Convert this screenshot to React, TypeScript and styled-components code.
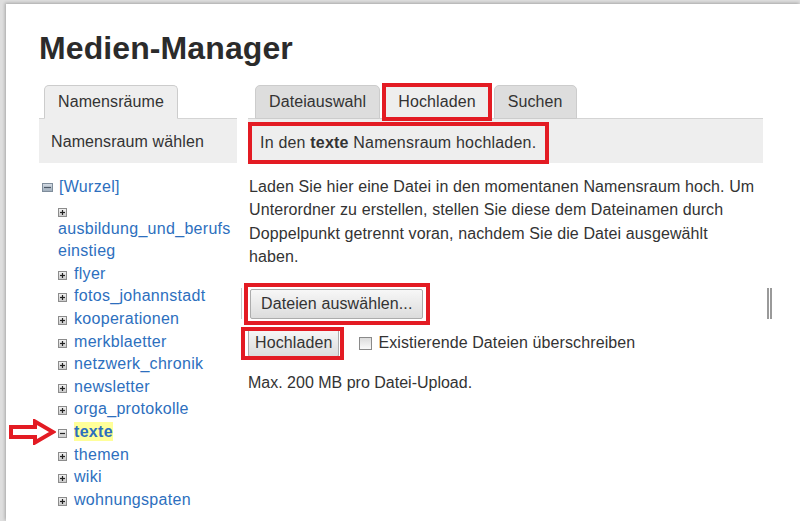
import React from "react";
import styled, { createGlobalStyle } from "styled-components";

const red = "#e31b23";
const linkBlue = "#2d6fbe";

const GlobalStyle = createGlobalStyle`
  html, body {
    margin: 0;
    padding: 0;
    background: #dedede;
  }
  body {
    font-family: "Liberation Sans", Arial, sans-serif;
    color: #333;
    font-size: 16px;
    overflow: hidden;
  }
`;

const folders = [
  "ausbildung_und_berufseinstieg",
  "flyer",
  "fotos_johannstadt",
  "kooperationen",
  "merkblaetter",
  "netzwerk_chronik",
  "newsletter",
  "orga_protokolle",
  "texte",
  "themen",
  "wiki",
  "wohnungspaten",
];

type Inset = { top: number; right: number; bottom: number; left: number };

const ToggleIcon = ({ open, root }: { open?: boolean; root?: boolean }) => {
  const w = root ? 11 : 9;
  const fillTop = root ? "#d7dee6" : "#f4f4f4";
  const fillBottom = root ? "#9eacba" : "#c9c9c9";
  const id = root ? "gRoot" : open ? "gOpen" : "gClosed";
  return (
    <svg width={w} height={9} viewBox={`0 0 ${w} 9`}>
      <defs>
        <linearGradient id={id} x1="0" y1="0" x2="0" y2="1">
          <stop offset="0" stopColor={fillTop} />
          <stop offset="1" stopColor={fillBottom} />
        </linearGradient>
      </defs>
      <rect x="0.5" y="0.5" width={w - 1} height="8" fill={`url(#${id})`} stroke={root ? "#7f8d9b" : "#8c8c8c"} />
      <path d={`M2 4.5h${w - 4}`} stroke={root ? "#4b5866" : "#222"} strokeWidth="1.2" />
      {!open && <path d="M4.5 2v5" stroke="#222" strokeWidth="1.2" />}
    </svg>
  );
};

const Arrow = () => (
  <svg width="48" height="26" viewBox="0 0 48 26">
    <path
      d="M3 8 L27 8 L27 2.5 L45 13 L27 23.5 L27 18 L3 18 Z"
      fill="#fff"
      stroke={red}
      strokeWidth="4"
      strokeLinejoin="miter"
    />
  </svg>
);

const App = () => {
  return (
    <>
      <GlobalStyle />
      <Page>
        <Title>Medien-Manager</Title>
        <Columns>
          <Sidebar>
            <TabRow>
              <Tab $active>Namensräume</Tab>
            </TabRow>
            <PanelBar>Namensraum wählen</PanelBar>
            <Tree>
              <TreeRow>
                <ToggleIcon open root />
                <TreeLink>[Wurzel]</TreeLink>
              </TreeRow>
              <SubTree>
                {folders.map((name) => {
                  const current = name === "texte";
                  const long = name.length > 20;
                  return (
                    <TreeItem key={name}>
                      {current && (
                        <ArrowMark>
                          <Arrow />
                        </ArrowMark>
                      )}
                      {long ? (
                        <IconLine>
                          <ToggleIcon />
                        </IconLine>
                      ) : (
                        <ToggleIcon open={current} />
                      )}
                      <TreeLink $current={current} $gap={!long}>
                        {name}
                      </TreeLink>
                    </TreeItem>
                  );
                })}
              </SubTree>
            </Tree>
          </Sidebar>

          <Main>
            <TabRow $indent>
              <Tab>Dateiauswahl</Tab>
              <Tab $active $mark={{ top: -3, right: -3, bottom: -3, left: -3 }}>
                Hochladen
              </Tab>
              <Tab>Suchen</Tab>
            </TabRow>
            <InfoBar>
              <InfoBox>
                In den&nbsp;<b>texte</b>&nbsp;Namensraum hochladen.
              </InfoBox>
            </InfoBar>
            <Intro>
              Laden Sie hier eine Datei in den momentanen Namensraum hoch. Um Unterordner zu erstellen,
              stellen Sie diese dem Dateinamen durch Doppelpunkt getrennt voran, nachdem Sie die Datei
              ausgewählt haben.
            </Intro>
            <FileField>
              <Button $height={30} $pad={10} $mark={{ top: -7, right: -8, bottom: -7, left: -7 }}>
                Dateien auswählen...
              </Button>
            </FileField>
            <UploadRow>
              <Button $height={28} $pad={6} $mark={{ top: -3, right: -6, bottom: -4, left: -8 }}>
                Hochladen
              </Button>
              <CheckLabel>
                <CheckBox type="checkbox" />
                Existierende Dateien überschreiben
              </CheckLabel>
            </UploadRow>
            <Note>Max. 200 MB pro Datei-Upload.</Note>
          </Main>
        </Columns>
      </Page>
    </>
  );
};

const Page = styled.div`
  margin: 4px 0 0 6px;
  min-height: 517px;
  background: #fff;
  box-shadow: -1px -1px 3px rgba(0, 0, 0, 0.25);
  padding: 25px 0 0 33px;
  box-sizing: border-box;
`;

const Title = styled.h1`
  margin: 0;
  font-size: 32px;
  line-height: 38px;
  font-weight: bold;
  color: #2b2b2b;
  letter-spacing: 0.1px;
`;

const Columns = styled.div`
  display: flex;
  gap: 11px;
  margin-top: 17px;
`;

const Sidebar = styled.div`
  width: 198px;
  flex: none;
`;

const Main = styled.div`
  width: 515px;
  flex: none;
`;

const TabRow = styled.div<{ $indent?: boolean }>`
  display: flex;
  gap: 4px;
  height: 35px;
  padding-left: ${(p) => (p.$indent ? "7px" : "5px")};
  border-bottom: 1px solid #d4d4d4;
  box-sizing: border-box;
`;

const Tab = styled.div<{ $active?: boolean; $mark?: Inset }>`
  position: relative;
  display: flex;
  align-items: center;
  padding: 0 13px;
  margin-top: 1px;
  margin-bottom: -1px;
  background: ${(p) => (p.$active ? "#eee" : "#ddd")};
  border: 1px solid #ccc;
  border-bottom-color: ${(p) => (p.$active ? "#eee" : "#ccc")};
  border-radius: 5px 5px 0 0;
  font-size: 16px;
  color: #333;
  letter-spacing: 0.1px;

  &::after {
    content: "";
    display: ${(p) => (p.$mark ? "block" : "none")};
    position: absolute;
    top: ${(p) => p.$mark?.top ?? 0}px;
    right: ${(p) => p.$mark?.right ?? 0}px;
    bottom: ${(p) => p.$mark?.bottom ?? 0}px;
    left: ${(p) => p.$mark?.left ?? 0}px;
    border: 4px solid ${red};
  }
`;

const PanelBar = styled.div`
  height: 44px;
  display: flex;
  align-items: center;
  padding: 2px 0 0 12px;
  box-sizing: border-box;
  background: #eee;
  font-size: 16px;
  letter-spacing: 0.1px;
`;

const Tree = styled.div`
  margin-top: 13px;
  padding-left: 3px;
  line-height: 22.6px;
  letter-spacing: 0.3px;
`;

const TreeRow = styled.div`
  display: flex;
  align-items: center;
  gap: 6px;
`;

const SubTree = styled.div`
  padding: 0 4px 0 16px;
`;

const TreeItem = styled.div`
  position: relative;
  overflow-wrap: anywhere;
  svg {
    vertical-align: -1px;
  }
`;

const IconLine = styled.div`
  height: 19px;
  line-height: 0;
  padding-top: 9px;
  box-sizing: border-box;
`;

const ArrowMark = styled.span`
  position: absolute;
  left: -50px;
  top: -2px;
  line-height: 0;
`;

const TreeLink = styled.a<{ $current?: boolean; $gap?: boolean }>`
  color: ${linkBlue};
  font-size: 16px;
  text-decoration: none;
  margin-left: ${(p) => (p.$gap ? "7px" : "0")};
  font-weight: ${(p) => (p.$current ? "bold" : "normal")};
  background: ${(p) => (p.$current ? "#ffff99" : "transparent")};
  padding: ${(p) => (p.$current ? "1px 0" : "0")};
`;

const InfoBar = styled.div`
  height: 44px;
  background: #eee;
  padding-top: 3px;
  box-sizing: border-box;
  display: flex;
  align-items: flex-start;
`;

const InfoBox = styled.div`
  display: flex;
  align-items: center;
  height: 42px;
  padding: 0 9px 0 8px;
  border: 4px solid ${red};
  box-sizing: border-box;
  font-size: 16px;
  color: #333;
  white-space: nowrap;
  letter-spacing: 0.2px;
`;

const Intro = styled.p`
  margin: 12px 0 0 1px;
  padding-right: 6px;
  font-size: 16px;
  line-height: 23.3px;
  color: #333;
  letter-spacing: 0.1px;
`;

const FileField = styled.div`
  margin: 20px 0 0 -7px;
  width: 531px;
  height: 31px;
  padding-left: 8px;
  border-left: 1px solid #c8c8c8;
  border-right: 5px double #9a9a9a;
  box-sizing: border-box;
  display: flex;
  align-items: center;
`;

const Button = styled.button<{ $mark?: Inset; $height: number; $pad: number }>`
  position: relative;
  height: ${(p) => p.$height}px;
  padding: 0 ${(p) => p.$pad}px;
  font-family: "Liberation Sans", Arial, sans-serif;
  font-size: 16px;
  letter-spacing: 0.1px;
  color: #333;
  background: linear-gradient(#f7f7f7, #dcdcdc);
  border: 1px solid #acacac;
  border-radius: 2px;

  &::after {
    content: "";
    display: ${(p) => (p.$mark ? "block" : "none")};
    position: absolute;
    top: ${(p) => p.$mark?.top ?? 0}px;
    right: ${(p) => p.$mark?.right ?? 0}px;
    bottom: ${(p) => p.$mark?.bottom ?? 0}px;
    left: ${(p) => p.$mark?.left ?? 0}px;
    border: 4px solid ${red};
  }
`;

const UploadRow = styled.div`
  display: flex;
  align-items: center;
  margin-top: 10px;
  gap: 20px;
`;

const CheckLabel = styled.label`
  display: flex;
  align-items: center;
  gap: 6px;
  font-size: 16px;
  color: #333;
  letter-spacing: 0.1px;
`;

const CheckBox = styled.input`
  appearance: none;
  margin: 0;
  width: 13px;
  height: 13px;
  border: 1px solid #8a8a8a;
  background: linear-gradient(#dcdcdc, #fafafa);
  box-sizing: border-box;
`;

const Note = styled.p`
  margin: 17px 0 0;
  font-size: 16px;
  color: #333;
`;

export default App;
